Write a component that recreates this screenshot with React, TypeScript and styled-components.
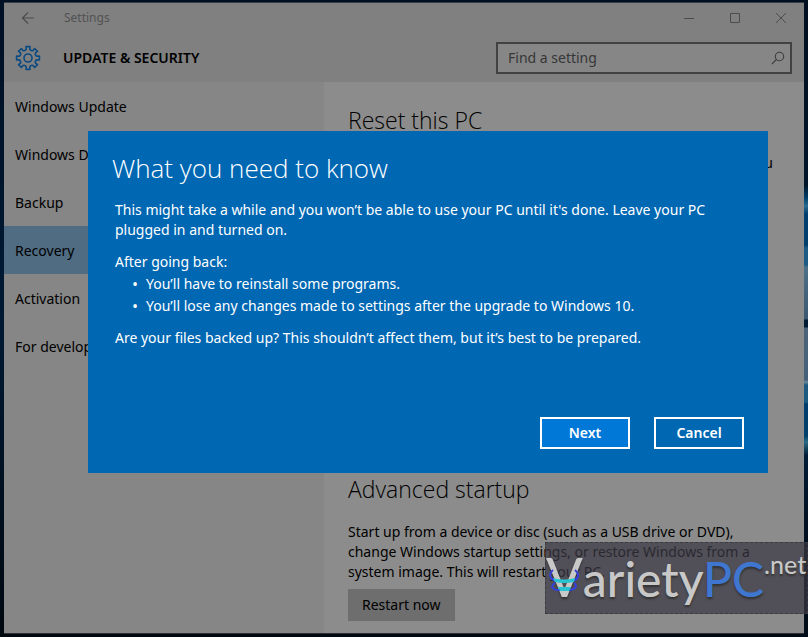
import React from "react";
import styled, { createGlobalStyle } from "styled-components";

const GlobalStyle = createGlobalStyle`
  *, *::before, *::after { box-sizing: border-box; }
  body { margin: 0; background: #000c18; }
  body, button, input { font-family: "Noto Sans", "Open Sans", sans-serif; font-size: 14px; line-height: 20px; }
  h1, h2, p, ul { margin: 0; padding: 0; }
`;

const Desktop = styled.div`
  display: flex;
  min-height: 100vh;
  padding: 2px 4px 3px;
  background:
    linear-gradient(180deg, #001020 0, #001428 185px, #00406c 198px, #2a6c90 206px, #003e6e 214px,
      #003e6e 245px, #1c5c84 248px, #1c5c84 265px, #4c7088 267px, #3c5870 319px, #001c34 320px,
      #001c34 327px, #4c6478 328px, #44607a 380px, #6a8a98 382px, #1c5a80 385px, #1c5a80 402px,
      #003c6c 404px, #00406c 436px, #2a6c84 442px, #001c38 455px, #001020 520px, #000c18 100%)
      right / 8px 100% no-repeat,
    linear-gradient(180deg, #001024, #001a34 50%, #000810);
`;

const Window = styled.main`
  flex: 1;
  display: flex;
  flex-direction: column;
  background: #8c8c8c;
  border-top: 1px solid #383c40;
  border-bottom: 1px solid #2c3034;
  color: #000;
`;

const TitleBar = styled.header`
  display: flex;
  align-items: center;
  height: 30px;
  padding-left: 8px;
  background: #808080;
  color: #525252;
  font-size: 12px;
`;

const ChromeButton = styled.button<{ $narrow?: boolean }>`
  display: grid;
  place-items: center;
  width: ${(p) => (p.$narrow ? 32 : 46)}px;
  height: 30px;
  padding: 0;
  border: 0;
  background: none;
  color: #4c4c4c;
`;

const WindowName = styled.span`
  flex: 1;
  padding-left: 20px;
`;

const PageHeader = styled.div`
  display: flex;
  align-items: center;
  height: 49px;
  padding: 0 12px 0 11px;
  background: #808080;
`;

const PageTitle = styled.h1`
  flex: 1;
  padding-left: 22px;
  font-size: 14px;
  font-weight: 600;
`;

const SearchBox = styled.label`
  display: flex;
  align-items: center;
  width: 296px;
  height: 32px;
  padding: 0 5px 0 10px;
  border: 2px solid #424242;
  background: #868686;
  color: #3c3c3c;
`;

const SearchInput = styled.input`
  flex: 1;
  min-width: 0;
  padding: 0;
  border: 0;
  outline: 0;
  background: none;
  color: inherit;
  &::placeholder { color: #363636; opacity: 1; }
`;

const Columns = styled.div`
  flex: 1;
  display: grid;
  grid-template-columns: 2fr 3fr;
`;

const Sidebar = styled.nav`
  display: flex;
  flex-direction: column;
  background: #868686;
`;

const NavLink = styled.a<{ $active?: boolean }>`
  display: flex;
  align-items: center;
  height: 48px;
  padding: 2px 0 0 11px;
  background: ${(p) => (p.$active ? "#4f6c83" : "transparent")};
  color: #000;
  text-decoration: none;
`;

const Content = styled.div`
  display: flex;
  flex-direction: column;
  justify-content: space-between;
  padding: 22px 31px 12px 24px;
`;

const Section = styled.section`
  display: flex;
  flex-direction: column;
  align-items: flex-start;
`;

const SectionTitle = styled.h2`
  padding-bottom: 17px;
  font: 300 23px/32px "Open Sans", "Noto Sans", sans-serif;
`;

const Intro = styled.p`
  align-self: flex-end;
  white-space: nowrap;
`;

const GrayButton = styled.button`
  height: 32px;
  margin-top: 7px;
  padding: 0 14px;
  border: 0;
  background: #6e6e6e;
  color: #000;
`;

const Dialog = styled.section`
  position: absolute;
  top: 131px;
  left: 88px;
  right: 40px;
  display: flex;
  flex-direction: column;
  padding: 19px 24px 24px;
  background: #0067b3;
  color: #fff;
`;

const DialogTitle = styled.h2`
  font: 300 26px/36px "Open Sans", "Noto Sans", sans-serif;
`;

const DialogBody = styled.div`
  display: flex;
  flex-direction: column;
  gap: 12px;
  padding: 14px 3px 69px;
`;

const BulletList = styled.ul`
  margin: -11px 0 -1px;
  padding-left: 17px;
  line-height: 22px;
  list-style: none;
`;

const Bullet = styled.li`
  display: flex;
  &::before { content: "•"; width: 14px; font-family: "Open Sans", sans-serif; font-size: 16px; }
`;

const Actions = styled.div`
  display: flex;
  justify-content: flex-end;
  gap: 24px;
`;

const DialogButton = styled.button<{ $primary?: boolean }>`
  width: 90px;
  height: 32px;
  padding: 0;
  border: 2px solid #fff;
  background: ${(p) => (p.$primary ? "#0078d7" : "#0067b3")};
  color: #fff;
  font-weight: 600;
`;

const Watermark = styled.div`
  position: absolute;
  top: 542px;
  right: 0;
  display: flex;
  align-items: center;
  width: 263px;
  height: 72px;
  border: 1px dashed #3b3b42;
  background: rgba(58, 56, 66, 0.72);
  color: #c8c8c8;
  font: 500 48px/68px Lato, sans-serif;
  text-shadow: 0 2px 2px #333;
  white-space: nowrap;
`;

const Initial = styled.span`
  font-size: 54px;
`;

const Blue = styled.span`
  color: #3f76d0;
`;

const Suffix = styled.span`
  align-self: flex-start;
  font-size: 25px;
  line-height: 42px;
`;

const Rings = styled.svg`
  position: absolute;
  top: 24px;
  left: 3px;
`;

const navItems = ["Windows Update", "Windows Defender", "Backup", "Recovery", "Activation", "For developers"];

const gearPath = Array.from({ length: 8 }, (_, i) => {
  const at = (r: number, deg: number) => {
    const a = ((i * 45 + deg - 90) * Math.PI) / 180;
    return `${(13 + r * Math.cos(a)).toFixed(2)} ${(13 + r * Math.sin(a)).toFixed(2)}`;
  };
  return `${i ? "L" : "M"}${at(9, -11)}L${at(11.6, -10)}L${at(11.6, 10)}L${at(9, 11)}Q${at(7.4, 22.5)} ${at(9, 34)}`;
}).join("") + "Z";

export default function App() {
  return (
    <>
      <GlobalStyle />
      <Desktop>
        <Window>
          <TitleBar>
            <ChromeButton $narrow aria-label="Back">
              <svg width="14" height="14" fill="none" stroke="currentColor" strokeWidth="1.2">
                <path d="M13 7H1.5M7 1.5 1.5 7 7 12.5" />
              </svg>
            </ChromeButton>
            <WindowName>Settings</WindowName>
            <ChromeButton aria-label="Minimize">
              <svg width="10" height="10" stroke="currentColor"><path d="M0 5.5h10" /></svg>
            </ChromeButton>
            <ChromeButton aria-label="Maximize">
              <svg width="10" height="10" fill="none" stroke="currentColor"><path d="M.5.5h9v9h-9z" /></svg>
            </ChromeButton>
            <ChromeButton aria-label="Close">
              <svg width="10" height="10" stroke="currentColor"><path d="m0 0 10 10M10 0 0 10" /></svg>
            </ChromeButton>
          </TitleBar>
          <PageHeader>
            <svg width="26" height="26" fill="none" stroke="#0b4a80" strokeWidth="1.6" strokeLinejoin="round">
              <path d={gearPath} />
              <circle cx="13" cy="13" r="4" />
            </svg>
            <PageTitle>UPDATE &amp; SECURITY</PageTitle>
            <SearchBox>
              <SearchInput type="text" placeholder="Find a setting" aria-label="Find a setting" />
              <svg width="14" height="14" fill="none" stroke="currentColor" strokeWidth="1.1">
                <circle cx="8.5" cy="5.5" r="4.2" />
                <path d="M5.5 8.5.8 13.2" />
              </svg>
            </SearchBox>
          </PageHeader>
          <Columns>
            <Sidebar>
              {navItems.map((name) => (
                <NavLink key={name} href="#" $active={name === "Recovery"}>{name}</NavLink>
              ))}
            </Sidebar>
            <Content>
              <Section>
                <SectionTitle>Reset this PC</SectionTitle>
                <Intro>If your PC isn’t running well, resetting might help. This lets you</Intro>
              </Section>
              <Section>
                <SectionTitle>Advanced startup</SectionTitle>
                <p>Start up from a device or disc (such as a USB drive or DVD), change Windows startup settings, or restore Windows from a system image. This will restart your PC.</p>
                <GrayButton>Restart now</GrayButton>
              </Section>
            </Content>
          </Columns>
        </Window>
      </Desktop>
      <Dialog role="dialog" aria-labelledby="dialog-title">
        <DialogTitle id="dialog-title">What you need to know</DialogTitle>
        <DialogBody>
          <p>This might take a while and you won’t be able to use your PC until it's done. Leave your PC plugged in and turned on.</p>
          <p>After going back:</p>
          <BulletList>
            <Bullet>You’ll have to reinstall some programs.</Bullet>
            <Bullet>You’ll lose any changes made to settings after the upgrade to Windows 10.</Bullet>
          </BulletList>
          <p>Are your files backed up? This shouldn’t affect them, but it’s best to be prepared.</p>
        </DialogBody>
        <Actions>
          <DialogButton $primary>Next</DialogButton>
          <DialogButton>Cancel</DialogButton>
        </Actions>
      </Dialog>
      <Watermark>
        <div><Initial>V</Initial>ariety<Blue>PC</Blue></div>
        <Suffix>.net</Suffix>
        <Rings width="32" height="28" fill="none">
          <path d="M4 3C-1 7 1 13 8 14h14C30 13 31 7 26 3M6 16C1 19 3 23 10 23h10c6 0 9-4 5-7" stroke="#3440e0" strokeWidth="2" />
          <path d="M4 11q11 3 22 0l-1 4q-10 2-19 0zM9 20h13l-2 4h-9z" fill="#27c4d4" />
        </Rings>
      </Watermark>
    </>
  );
}
